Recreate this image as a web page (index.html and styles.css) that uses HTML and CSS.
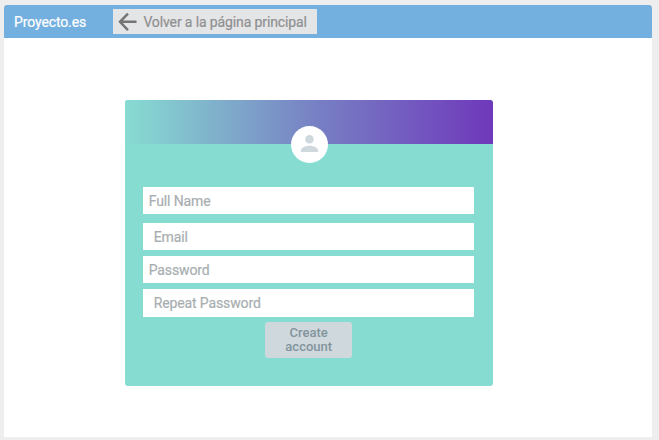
FILE: index.html
```html
<!DOCTYPE html>
<html lang="es">
<head>
<meta charset="utf-8">
<title>Proyecto.es</title>
<link rel="stylesheet" href="styles.css">
</head>
<body>
<div class="window">
  <header class="topbar">
    <span class="brand">Proyecto.es</span>
    <button class="back" type="button">
      <svg class="arrow" viewBox="0 0 20 20"><path d="M19.500 10.300H2.500M10.500 1.600L2.100 10.300l8.400 8.700"/></svg>
      <span>Volver a la página principal</span>
    </button>
  </header>
  <main class="content">
    <form class="card">
      <div class="banner">
        <div class="avatar">
          <svg viewBox="0 0 16 16"><circle cx="8" cy="4" r="4"/><path d="M0 16v-1.8C0 11.4 5.2 10 8 10s8 1.400 8 4.200V16z"/></svg>
        </div>
      </div>
      <div class="fields">
        <div class="field name">Full Name</div>
        <div class="field email indent">Email</div>
        <div class="field password">Password</div>
        <div class="field repeat indent">Repeat Password</div>
        <button class="submit" type="button"><span>Create</span><span>account</span></button>
      </div>
    </form>
  </main>
</div>
</body>
</html>
```
FILE: styles.css
```css
* { box-sizing: border-box; }
body {
  margin: 0;
  height: 440px;
  padding: 5px 7px 3px 4px;
  background: #eeeeee;
  font-family: Roboto, "Liberation Sans", sans-serif;
  font-size: 14px;
  letter-spacing: -0.120px;
  -webkit-text-stroke: 0.200px;
  overflow: hidden;
}
button { font: inherit; letter-spacing: inherit; border: 0; margin: 0; }
.window {
  height: 432px;
  background: #fff;
  border-radius: 3px 3px 0 0;
  overflow: hidden;
}
.topbar {
  display: flex;
  align-items: flex-start;
  height: 33.400px;
  padding: 4px 0 0 10px;
  background: #73b0df;
}
.brand {
  width: 99.400px;
  line-height: 26px;
  color: #fff;
}
.back {
  display: flex;
  align-items: center;
  width: 204px;
  height: 25px;
  padding: 0 0 0 5px;
  background: #e4e5e7;
  color: #909090;
  white-space: nowrap;
}
.arrow {
  width: 19px;
  height: 19px;
  margin-right: 6px;
  fill: none;
  stroke: #757575;
  stroke-width: 2.600;
}
.content { padding: 61.600px 0 0 121px; }
.card {
  width: 368px;
  height: 286px;
  border-radius: 3px;
  background: #87dcd2;
}
.banner {
  display: flex;
  justify-content: center;
  height: 44.300px;
  padding: 26px 0 0;
  border-radius: 3px 3px 0 0;
  background: linear-gradient(90deg, #87dcd2, #7780c4 52%, #6f38bb);
}
.avatar {
  display: flex;
  justify-content: center;
  align-items: flex-start;
  width: 37px;
  height: 37px;
  padding-top: 9.400px;
  border-radius: 50%;
  background: #fff;
}
.avatar svg { width: 17px; height: 17px; fill: #cfd8dc; }
.fields { padding: 42.700px 19px 0 18.400px; }
.field {
  height: 27.200px;
  padding-left: 5.300px;
  background: #fff;
  color: #a7aeb0;
  line-height: 28px;
}
.indent { padding-left: 10.300px; }
.name { margin-bottom: 8.500px; }
.email { margin-bottom: 5.800px; }
.password { margin-bottom: 6.500px; }
.repeat { margin-bottom: 5.400px; }
.submit {
  display: flex;
  flex-direction: column;
  align-items: center;
  width: 87.500px;
  height: 36px;
  margin-left: 121.600px;
  padding: 4px 0 0;
  border-radius: 3px;
  background: #cfd8dc;
  color: #82949c;
  font-size: 13px;
  font-weight: 500;
  letter-spacing: 0;
  -webkit-text-stroke: 0;
  line-height: 14px;
}
```
